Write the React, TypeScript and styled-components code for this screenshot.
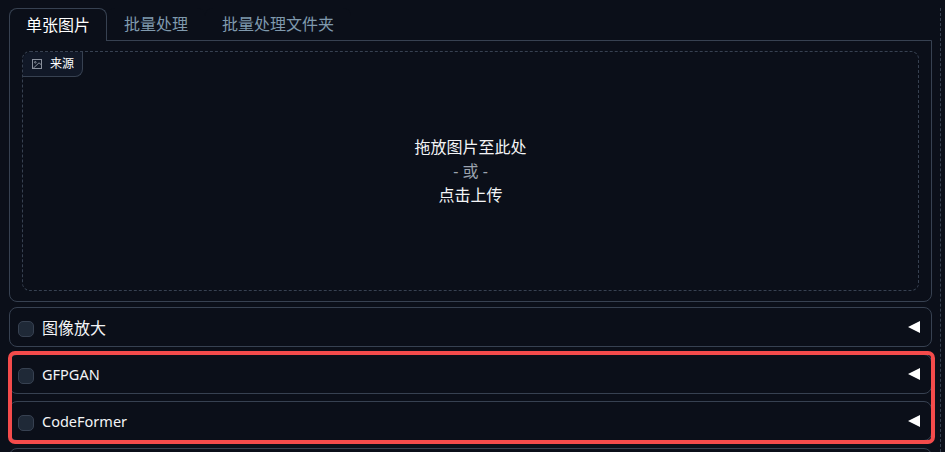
import React from 'react';
import styled, { createGlobalStyle } from 'styled-components';

const GlobalStyle = createGlobalStyle`
  html, body {
    margin: 0;
    height: 100%;
    overflow: hidden;
    background: #0b0f19;
  }
  * {
    box-sizing: border-box;
  }
`;

const Page = styled.div`
  position: relative;
  width: 945px;
  height: 452px;
  padding: 8px 13px 0 9px;
  overflow: hidden;
  font-family: 'Noto Sans', 'Noto Sans CJK SC', sans-serif;
  color: #f3f4f6;
`;

const Tabs = styled.div`
  display: flex;
  height: 33px;
`;

const Tab = styled.div<{ $active?: boolean }>`
  height: ${(p) => (p.$active ? '33px' : '32px')};
  padding: 0 ${(p) => (p.$active ? '16px' : '17px')};
  font-size: 16px;
  line-height: 33px;
  color: ${(p) => (p.$active ? '#ffffff' : '#7f99ad')};
  border: ${(p) => (p.$active ? '1px solid #374151' : 'none')};
  border-bottom: none;
  border-radius: 8px 8px 0 0;
  background: #0b0f19;
  position: relative;
  z-index: 1;
`;

const Panel = styled.div`
  margin-top: -1px;
  height: 262px;
  padding: 10px 12px 9px;
  border: 1px solid #374151;
  border-radius: 0 0 8px 8px;
`;

const Dropzone = styled.div`
  position: relative;
  height: 240px;
  display: flex;
  flex-direction: column;
  align-items: center;
  justify-content: center;
  border: 1px dashed #374151;
  border-radius: 8px;
  font-size: 16px;
  line-height: 24px;
`;

const SourceLabel = styled.div`
  position: absolute;
  top: 0;
  left: 0;
  display: flex;
  align-items: center;
  gap: 7px;
  height: 25px;
  padding: 0 8px;
  font-size: 12px;
  font-weight: 400;
  color: #ffffff;
  background: #111827;
  border-right: 1px solid #374151;
  border-bottom: 1px solid #374151;
  border-radius: 8px 0 8px 0;
`;

const DropText = styled.div`
  color: #f3f4f6;
`;

const OrText = styled.div`
  color: #9ca3af;
`;

const Accordions = styled.div`
  display: flex;
  flex-direction: column;
  gap: 7px;
  margin-top: 5px;
`;

const Accordion = styled.div`
  display: flex;
  align-items: center;
  justify-content: space-between;
  flex-shrink: 0;
  height: 40px;
  padding: 0 11px 0 8px;
  border: 1px solid #374151;
  border-radius: 8px;
`;

const AccordionLabel = styled.div<{ $latin?: boolean }>`
  display: flex;
  align-items: center;
  gap: 8px;
  font-size: ${(p) => (p.$latin ? '14.5px' : '16px')};
  font-weight: 400;
  color: #f3f4f6;
`;

const Checkbox = styled.span`
  width: 16px;
  height: 16px;
  margin-top: 3px;
  border: 1px solid #374151;
  border-radius: 5px;
  background: #1f2937;
`;

const Arrow = styled.span`
  width: 0;
  height: 0;
  margin-top: -1px;
  border-top: 6px solid transparent;
  border-bottom: 6px solid transparent;
  border-right: 12px solid #ffffff;
`;

const RedBox = styled.div`
  position: absolute;
  left: 8px;
  top: 351px;
  width: 927px;
  height: 93px;
  border: 4px solid #f44b4b;
  border-radius: 7px;
  pointer-events: none;
`;

const ScrollEdge = styled.div`
  position: absolute;
  top: 8px;
  right: 4px;
  bottom: 0;
  border-right: 1px dashed #374151;
`;

const ImageIcon = () => (
  <svg width="12" height="12" viewBox="0 0 12 12" fill="none" stroke="#8a909c" strokeWidth="1">
    <rect x="1.5" y="1.5" width="9" height="9" />
    <circle cx="4.3" cy="4.3" r="0.8" />
    <path d="M10.5 7 8 4.8 2 10.5" />
  </svg>
);

const items = [
  { name: '图像放大', latin: false },
  { name: 'GFPGAN', latin: true },
  { name: 'CodeFormer', latin: true },
];

export default function App() {
  return (
    <Page>
      <GlobalStyle />
      <Tabs>
        <Tab $active>单张图片</Tab>
        <Tab>批量处理</Tab>
        <Tab>批量处理文件夹</Tab>
      </Tabs>
      <Panel>
        <Dropzone>
          <SourceLabel>
            <ImageIcon />
            来源
          </SourceLabel>
          <DropText>拖放图片至此处</DropText>
          <OrText>- 或 -</OrText>
          <DropText>点击上传</DropText>
        </Dropzone>
      </Panel>
      <Accordions>
        {items.map((item) => (
          <Accordion key={item.name}>
            <AccordionLabel $latin={item.latin}>
              <Checkbox />
              {item.name}
            </AccordionLabel>
            <Arrow />
          </Accordion>
        ))}
        <Accordion />
      </Accordions>
      <RedBox />
      <ScrollEdge />
    </Page>
  );
}
